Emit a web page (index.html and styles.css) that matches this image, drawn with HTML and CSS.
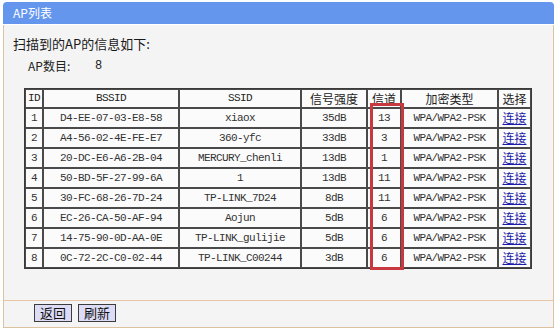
FILE: index.html
```html
<!DOCTYPE html>
<html lang="zh">
<head>
<meta charset="utf-8">
<title>AP列表</title>
<link rel="stylesheet" href="styles.css">
</head>
<body>
<div class="panel">
  <div class="titlebar">AP列表</div>
  <div class="content">
    <div class="heading">扫描到的AP的信息如下:</div>
    <div class="count"><span class="count-label">AP数目:</span><span class="count-value">8</span></div>
    <div class="table-wrap">
      <table class="ap-table">
        <colgroup>
          <col class="c-id"><col class="c-bssid"><col class="c-ssid"><col class="c-sig"><col class="c-ch"><col class="c-enc"><col class="c-sel">
        </colgroup>
        <thead>
          <tr><th>ID</th><th>BSSID</th><th>SSID</th><th>信号强度</th><th>信道</th><th>加密类型</th><th>选择</th></tr>
        </thead>
        <tbody>
          <tr><td>1</td><td>D4-EE-07-03-E8-58</td><td>xiaox</td><td>35dB</td><td>13</td><td>WPA/WPA2-PSK</td><td><a href="#">连接</a></td></tr>
          <tr><td>2</td><td>A4-56-02-4E-FE-E7</td><td>360-yfc</td><td>33dB</td><td>3</td><td>WPA/WPA2-PSK</td><td><a href="#">连接</a></td></tr>
          <tr><td>3</td><td>20-DC-E6-A6-2B-04</td><td>MERCURY_chenli</td><td>13dB</td><td>1</td><td>WPA/WPA2-PSK</td><td><a href="#">连接</a></td></tr>
          <tr><td>4</td><td>50-BD-5F-27-99-6A</td><td>1</td><td>13dB</td><td>11</td><td>WPA/WPA2-PSK</td><td><a href="#">连接</a></td></tr>
          <tr><td>5</td><td>30-FC-68-26-7D-24</td><td>TP-LINK_7D24</td><td>8dB</td><td>11</td><td>WPA/WPA2-PSK</td><td><a href="#">连接</a></td></tr>
          <tr><td>6</td><td>EC-26-CA-50-AF-94</td><td>Aojun</td><td>5dB</td><td>6</td><td>WPA/WPA2-PSK</td><td><a href="#">连接</a></td></tr>
          <tr><td>7</td><td>14-75-90-0D-AA-0E</td><td>TP-LINK_gulijie</td><td>5dB</td><td>6</td><td>WPA/WPA2-PSK</td><td><a href="#">连接</a></td></tr>
          <tr><td>8</td><td>0C-72-2C-C0-02-44</td><td>TP-LINK_C00244</td><td>3dB</td><td>6</td><td>WPA/WPA2-PSK</td><td><a href="#">连接</a></td></tr>
        </tbody>
      </table>
      <div class="highlight"></div>
    </div>
  </div>
  <div class="footer">
    <button class="btn" type="button">返回</button>
    <button class="btn" type="button">刷新</button>
  </div>
</div>
</body>
</html>
```
FILE: styles.css
```css
html, body {
  margin: 0;
  padding: 0;
  background: #ffffff;
}

body {
  font-family: "Noto Sans CJK SC", "Liberation Sans", sans-serif;
  font-size: 12px;
  color: #222;
}

.panel {
  margin: 2px 0 0 3px;
  width: 551px;
}

.titlebar {
  height: 22px;
  line-height: 22px;
  padding-left: 10px;
  background: #6496ee;
  color: #ffffff;
  font-size: 12px;
  border-radius: 4px 4px 0 0;
  border-bottom: 1px solid #ffffff;
}

.content {
  background: #f4f4f4;
  border-left: 1px solid #dcc29f;
  border-right: 1px solid #dcc29f;
  padding: 11px 0 31px 9px;
}

.heading {
  font-size: 13px;
  line-height: 16px;
  color: #1a1a1a;
}

.count {
  margin-top: 6px;
  padding-left: 15px;
  font-size: 12px;
  line-height: 16px;
  display: flex;
}

.count-label {
  width: 67px;
}

.count-value {
  font-family: "Liberation Mono", monospace;
  font-size: 12px;
}

.table-wrap {
  position: relative;
  margin: 14px 0 0 11px;
  width: 508px;
}

.ap-table {
  table-layout: fixed;
  width: 508px;
  border-collapse: separate;
  border-spacing: 0;
  border: 1px solid #3a3a3a;
  background: #fbfbfb;
}

.c-id { width: 18px; }
.c-bssid { width: 136px; }
.c-ssid { width: 122px; }
.c-sig { width: 66px; }
.c-ch { width: 34px; }
.c-enc { width: 97px; }
.c-sel { width: 33px; }

.ap-table th,
.ap-table td {
  border: 1px solid #4a4a4a;
  padding: 0;
  text-align: center;
  white-space: nowrap;
  overflow: hidden;
}

.ap-table th {
  height: 17px;
  font-weight: normal;
  font-size: 12px;
  line-height: 17px;
  color: #222;
}

.ap-table th:first-child,
.ap-table th:nth-child(2),
.ap-table th:nth-child(3) {
  font-family: "Liberation Mono", monospace;
  font-size: 11px;
  letter-spacing: -0.6px;
}

.ap-table td {
  height: 18px;
  line-height: 18px;
  font-family: "Liberation Mono", monospace;
  font-size: 11px;
  letter-spacing: -0.6px;
  color: #333;
}

.ap-table td:last-child {
  font-family: "Noto Sans CJK SC", sans-serif;
  font-size: 12px;
  letter-spacing: 0;
}

.ap-table a {
  color: #1c1ca8;
  text-decoration: underline;
}

.highlight {
  position: absolute;
  left: 346px;
  top: 15px;
  width: 28px;
  height: 161px;
  border: 3px solid #c8393f;
}

.footer {
  background: #f4f4f4;
  border-top: 1px solid #e8c5a4;
  border-left: 1px solid #dcc29f;
  border-right: 1px solid #dcc29f;
  border-bottom: 1px solid #dcc29f;
  padding: 3px 0 5px 30px;
  display: flex;
  gap: 6px;
}

.btn {
  width: 38px;
  height: 18px;
  padding: 0;
  margin: 0;
  background: #dcdcf6;
  border: 1px solid #3c3c3c;
  font-family: "Noto Sans CJK SC", sans-serif;
  font-size: 13px;
  line-height: 16px;
  color: #111;
}
```
